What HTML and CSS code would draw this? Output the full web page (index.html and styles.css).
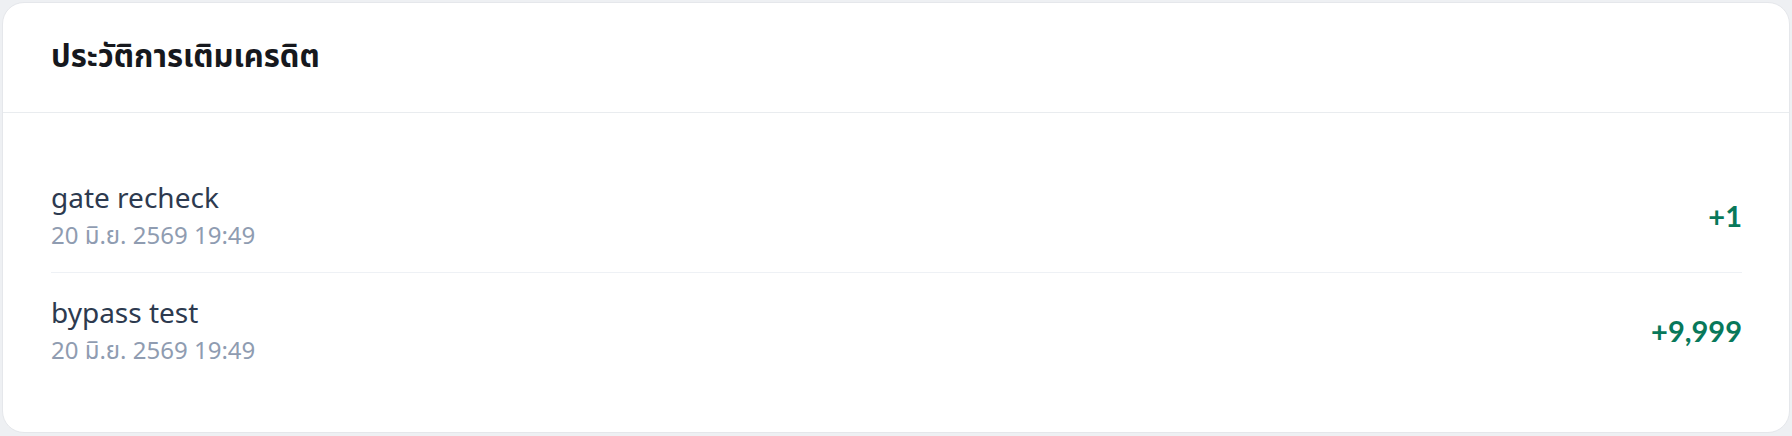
FILE: index.html
```html
<!DOCTYPE html>
<html lang="th">
<head>
  <meta charset="UTF-8">
  <title>ประวัติการเติมเครดิต</title>
  <link rel="stylesheet" href="styles.css">
</head>
<body>

  <!-- Credit top-up history card -->
  <section class="card">
    <header class="card-header">
      <h2>ประวัติการเติมเครดิต</h2>
    </header>

    <ul class="history">
      <li class="history-item">
        <div class="item-info">
          <div class="item-title">gate recheck</div>
          <div class="item-date">20 มิ.ย. 2569 19:49</div>
        </div>
        <div class="item-amount">+1</div>
      </li>
      <li class="history-item">
        <div class="item-info">
          <div class="item-title">bypass test</div>
          <div class="item-date">20 มิ.ย. 2569 19:49</div>
        </div>
        <div class="item-amount">+9,999</div>
      </li>
    </ul>
  </section>

</body>
</html>
```

FILE: styles.css
```css
body {
  margin: 0;
  padding: 2px;
  background: #eef0f3;
  font-family: "Noto Sans", "Noto Sans Thai", sans-serif;
}

.card {
  background: #ffffff;
  border: 1px solid #e5e7eb;
  border-radius: 22px;
  height: 431px;
  box-sizing: border-box;
}

.card-header {
  height: 109px;
  padding: 0 48px;
  display: flex;
  align-items: center;
  border-bottom: 1px solid #e9ecef;
}

.card-header h2 {
  margin: 0;
  font-size: 31px;
  font-weight: 700;
  color: #16181d;
}

.history {
  list-style: none;
  margin: 0;
  padding: 45px 47px 0 48px;
}

.history-item {
  display: flex;
  align-items: center;
  justify-content: space-between;
  padding: 19px 0;
  border-bottom: 1px solid #eef1f5;
}

.history-item:last-child {
  border-bottom: none;
}

.item-title {
  font-size: 28px;
  line-height: 40px;
  color: #2d3a4f;
}

.item-date {
  font-size: 24px;
  line-height: 36px;
  color: #8f9cb1;
}

.item-amount {
  font-family: Lato, "Noto Sans", sans-serif;
  font-size: 29px;
  font-weight: 700;
  color: #08785a;
}
```
